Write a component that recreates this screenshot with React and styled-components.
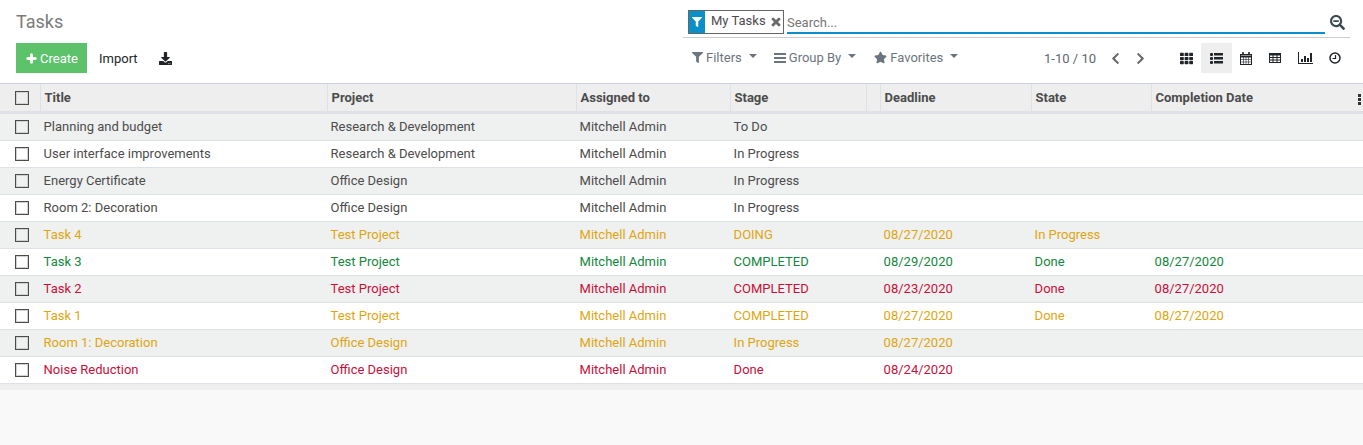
import React from "react";
import styled, { createGlobalStyle } from "styled-components";
import { FaFilter, FaPlus, FaTimes, FaSearchMinus, FaDownload, FaStar, FaChevronLeft, FaChevronRight, FaTh } from "react-icons/fa";

const GlobalStyle = createGlobalStyle`
    html, body {
        margin: 0;
        padding: 0;
        background: #f9f9f9;
        font-family: Roboto, "Noto Sans", sans-serif;
        font-size: 13px;
        color: #4c4c4c;
    }
`;

const Page = styled.div`
    width: 1363px;
    height: 445px;
    overflow: hidden;
    background: #f9f9f9;
`;

const ControlPanel = styled.div`
    height: 83px;
    background: #fff;
    border-bottom: 1px solid #ced4da;
    display: grid;
    grid-template-columns: 667px 667px;
    padding-left: 16px;
`;

const LeftPanel = styled.div`
    display: flex;
    flex-direction: column;
`;

const Breadcrumb = styled.div`
    font-size: 18px;
    line-height: 21px;
    color: #7c7b7b;
    margin-top: 11px;
    height: 32px;
`;

const Buttons = styled.div`
    display: flex;
    align-items: center;
    height: 30px;
`;

const CreateButton = styled.button`
    display: flex;
    align-items: center;
    gap: 3px;
    width: 71px;
    height: 30px;
    padding: 0 0 0 10px;
    border: 0;
    background: #5cc36a;
    color: #fff;
    font: 13px Roboto, sans-serif;
`;

const PlainButton = styled.button`
    border: 0;
    background: none;
    padding: 0;
    margin-left: 12px;
    color: #212529;
    font: 13px Roboto, sans-serif;
`;

const IconButton = styled(PlainButton)`
    margin-left: 21px;
    display: flex;
    align-items: center;
`;

const RightPanel = styled.div`
    display: flex;
    flex-direction: column;
`;

const SearchRow = styled.div`
    height: 38px;
    box-sizing: border-box;
    border-bottom: 1px solid #ccc;
    display: flex;
    align-items: flex-start;
    padding: 10px 0 0 5px;
`;

const Facet = styled.div`
    display: flex;
    align-items: center;
    height: 24px;
    box-sizing: border-box;
    width: 96px;
    border: 1px solid #666;
    flex-shrink: 0;
`;

const FacetIcon = styled.span`
    width: 16px;
    height: 100%;
    background: #0a8fc9;
    color: #fff;
    display: flex;
    align-items: center;
    justify-content: center;
`;

const FacetLabel = styled.span`
    padding-left: 6px;
    font-size: 13px;
    color: #4c4c4c;
    line-height: 20px;
    margin-top: -3px;
`;

const FacetClose = styled.span`
    margin-left: 4px;
    display: flex;
    color: #666;
`;

const SearchBox = styled.div`
    flex: 1;
    display: flex;
    align-items: center;
    justify-content: space-between;
    height: 24px;
    padding-right: 5px;
`;

const SearchInput = styled.div`
    width: 538px;
    margin-left: 3px;
    height: 24px;
    box-sizing: border-box;
    border-bottom: 2px solid #0a8fc9;
    color: #777;
    line-height: 26px;
`;

const BottomRow = styled.div`
    display: flex;
    align-items: center;
    height: 40px;
    padding-left: 9px;
`;

const Dropdown = styled.div`
    display: flex;
    align-items: center;
    gap: 3px;
    color: #6c757d;
    margin-right: ${(p) => p.$gap}px;
    margin-top: -1px;
`;

const Caret = styled.span`
    width: 0;
    height: 0;
    margin-left: 4px;
    margin-top: -3px;
    border-left: 4px solid transparent;
    border-right: 4px solid transparent;
    border-top: 4px solid #6c757d;
`;

const Pager = styled.div`
    margin-left: auto;
    display: flex;
    align-items: center;
    color: #5c6670;
`;

const PagerArrow = styled.span`
    display: flex;
    margin-left: ${(p) => p.$gap}px;
    color: #666;
`;

const Views = styled.div`
    display: flex;
    align-items: center;
    margin-left: 24px;
`;

const ViewButton = styled.span`
    width: ${(p) => p.$width || 30}px;
    height: 30px;
    display: flex;
    align-items: center;
    justify-content: center;
    color: #212529;
    background: ${(p) => (p.$active ? "#eeeeee" : "transparent")};
`;

const Row = styled.div`
    display: grid;
    grid-template-columns: 40px 287px 249px 154px 136px 14px 151px 120px 212px;
    align-items: center;
`;

const HeadRow = styled(Row)`
    height: 30px;
    box-sizing: border-box;
    background: #eeeeee;
    border-bottom: 3px solid #dee2e6;
    align-items: stretch;
    font-weight: 700;
    color: #4c4c4c;
`;

const HeadCell = styled.div`
    border-left: 1px solid #dee2e6;
    padding-left: 3.5px;
    display: flex;
    align-items: center;
    position: relative;
`;

const BodyRow = styled(Row)`
    height: 27px;
    box-sizing: border-box;
    border-bottom: 1px solid #dee2e6;
    background: ${(p) => (p.$odd ? "#eff0f0" : "#fff")};
    color: ${(p) => p.$color};
`;

const Cell = styled.div`
    padding: 0 0 2px 3.6px;
    white-space: nowrap;
`;

const CheckCell = styled.div`
    display: flex;
    align-items: center;
    padding-left: 15px;
`;

const Checkbox = styled.span`
    width: 14px;
    height: 14px;
    box-sizing: border-box;
    border: 1px solid #4c4c4c;
    background: transparent;
    box-shadow: inset 0 0 0 1px #cfd2d4;
    display: block;
`;

const MoreDots = styled.span`
    position: absolute;
    right: 2px;
    top: 10px;
    width: 3px;
    height: 3px;
    background: #333;
    box-shadow: 0 4px 0 #333, 0 8px 0 #333;
`;

const FooterBand = styled.div`
    height: 6px;
    background: #eeeeee;
`;

const colors = {
    normal: "#4c4c4c",
    warn: "#e0a60f",
    ok: "#12883c",
    bad: "#c9103a",
};

const tasks = [
    ["Planning and budget", "Research & Development", "To Do", "", "", "", "normal"],
    ["User interface improvements", "Research & Development", "In Progress", "", "", "", "normal"],
    ["Energy Certificate", "Office Design", "In Progress", "", "", "", "normal"],
    ["Room 2: Decoration", "Office Design", "In Progress", "", "", "", "normal"],
    ["Task 4", "Test Project", "DOING", "08/27/2020", "In Progress", "", "warn"],
    ["Task 3", "Test Project", "COMPLETED", "08/29/2020", "Done", "08/27/2020", "ok"],
    ["Task 2", "Test Project", "COMPLETED", "08/23/2020", "Done", "08/27/2020", "bad"],
    ["Task 1", "Test Project", "COMPLETED", "08/27/2020", "Done", "08/27/2020", "warn"],
    ["Room 1: Decoration", "Office Design", "In Progress", "08/27/2020", "", "", "warn"],
    ["Noise Reduction", "Office Design", "Done", "08/24/2020", "", "", "bad"],
];

const BarsIcon = () => (
    <svg width="12" height="10" viewBox="0 0 12 10" fill="currentColor">
        <rect y="0" width="12" height="2" />
        <rect y="4" width="12" height="2" />
        <rect y="8" width="12" height="2" />
    </svg>
);

const ListIcon = () => (
    <svg width="13" height="11" viewBox="0 0 13 11" fill="currentColor">
        <rect y="0" width="3" height="3" rx="1" />
        <rect y="4" width="3" height="3" rx="1" />
        <rect y="8" width="3" height="3" rx="1" />
        <rect x="4" y="0" width="9" height="2.5" />
        <rect x="4" y="4" width="9" height="2.5" />
        <rect x="4" y="8" width="9" height="2.5" />
    </svg>
);

const CalendarIcon = () => (
    <svg width="12" height="13" viewBox="0 0 12 13" fill="none" stroke="currentColor" strokeWidth="1">
        <rect x="0.5" y="2.5" width="11" height="10" />
        <path d="M0 4.5h12" strokeWidth="2" />
        <path d="M3 0v3M9 0v3" strokeWidth="1.6" />
        <path d="M0 7.5h12M0 10h12M3.5 5v8M6 5v8M8.5 5v8" strokeWidth="0.6" />
    </svg>
);

const TableIcon = () => (
    <svg width="12" height="10" viewBox="0 0 12 10" fill="none" stroke="currentColor" strokeWidth="1">
        <rect x="0.5" y="0.5" width="11" height="9" />
        <path d="M0 1.5h12" strokeWidth="2" />
        <path d="M0 4.5h12M0 7h12M4 2v8M8 2v8" />
    </svg>
);

const ChartIcon = () => (
    <svg width="15" height="12" viewBox="0 0 15 12" fill="currentColor">
        <path d="M0 0h1v11h14v1H0z" />
        <rect x="3" y="7" width="2" height="3" />
        <rect x="6" y="4" width="2" height="6" />
        <rect x="9" y="6" width="2" height="4" />
        <rect x="12" y="1" width="2" height="9" />
    </svg>
);

const ClockIcon = () => (
    <svg width="12" height="12" viewBox="0 0 12 12" fill="none" stroke="currentColor" strokeWidth="1.5">
        <circle cx="6" cy="6" r="5" />
        <path d="M6.5 3v3.5H3.5" strokeWidth="1.2" />
    </svg>
);

const App = () => {
    return (
        <Page>
            <GlobalStyle />
            <ControlPanel>
                <LeftPanel>
                    <Breadcrumb>Tasks</Breadcrumb>
                    <Buttons>
                        <CreateButton><FaPlus size={11} stroke="currentColor" strokeWidth={40} /> Create</CreateButton>
                        <PlainButton>Import</PlainButton>
                        <IconButton><FaDownload size={13} /></IconButton>
                    </Buttons>
                </LeftPanel>
                <RightPanel>
                    <SearchRow>
                        <Facet>
                            <FacetIcon><FaFilter size={10} /></FacetIcon>
                            <FacetLabel>My Tasks</FacetLabel>
                            <FacetClose><FaTimes size={12} stroke="currentColor" strokeWidth={30} /></FacetClose>
                        </Facet>
                        <SearchBox>
                            <SearchInput>Search...</SearchInput>
                            <FaSearchMinus size={15} color="#3c4a50" />
                        </SearchBox>
                    </SearchRow>
                    <BottomRow>
                        <Dropdown $gap={17}><FaFilter size={11} /> Filters <Caret /></Dropdown>
                        <Dropdown $gap={18}><BarsIcon /> Group By <Caret /></Dropdown>
                        <Dropdown $gap={18}><FaStar size={13} /> Favorites <Caret /></Dropdown>
                        <Pager>
                            1-10 / 10
                            <PagerArrow $gap={13}><FaChevronLeft size={13} /></PagerArrow>
                            <PagerArrow $gap={12}><FaChevronRight size={13} /></PagerArrow>
                        </Pager>
                        <Views>
                            <ViewButton><FaTh size={13} /></ViewButton>
                            <ViewButton $active $width={31}><ListIcon /></ViewButton>
                            <ViewButton $width={28}><CalendarIcon /></ViewButton>
                            <ViewButton><TableIcon /></ViewButton>
                            <ViewButton><ChartIcon /></ViewButton>
                            <ViewButton><ClockIcon /></ViewButton>
                        </Views>
                    </BottomRow>
                </RightPanel>
            </ControlPanel>
            <HeadRow>
                <CheckCell><Checkbox /></CheckCell>
                <HeadCell>Title</HeadCell>
                <HeadCell>Project</HeadCell>
                <HeadCell>Assigned to</HeadCell>
                <HeadCell>Stage</HeadCell>
                <HeadCell />
                <HeadCell>Deadline</HeadCell>
                <HeadCell>State</HeadCell>
                <HeadCell>Completion Date<MoreDots /></HeadCell>
            </HeadRow>
            {tasks.map((t, i) => (
                <BodyRow key={t[0]} $odd={i % 2 === 0} $color={colors[t[6]]}>
                    <CheckCell><Checkbox /></CheckCell>
                    <Cell>{t[0]}</Cell>
                    <Cell>{t[1]}</Cell>
                    <Cell>Mitchell Admin</Cell>
                    <Cell>{t[2]}</Cell>
                    <Cell />
                    <Cell>{t[3]}</Cell>
                    <Cell>{t[4]}</Cell>
                    <Cell>{t[5]}</Cell>
                </BodyRow>
            ))}
            <FooterBand />
        </Page>
    );
};

export default App;
